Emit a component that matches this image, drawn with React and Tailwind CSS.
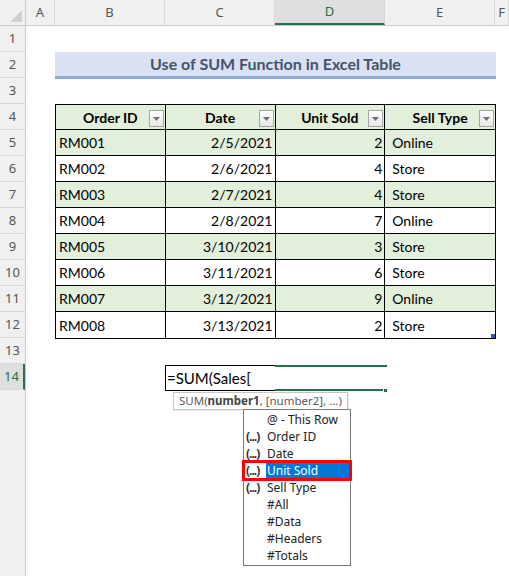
import React from 'react'

const cols = [
    { l: 'A', w: 'w-[29px]' },
    { l: 'B', w: 'w-[110px]' },
    { l: 'C', w: 'w-[110px]' },
    { l: 'D', w: 'w-[110px]', active: true },
    { l: 'E', w: 'w-[110px]' },
    { l: 'F', w: 'flex-1' },
]

const data = [
    ['RM001', '2/5/2021', 2, 'Online'],
    ['RM002', '2/6/2021', 4, 'Store'],
    ['RM003', '2/7/2021', 4, 'Store'],
    ['RM004', '2/8/2021', 7, 'Online'],
    ['RM005', '3/10/2021', 3, 'Store'],
    ['RM006', '3/11/2021', 6, 'Store'],
    ['RM007', '3/12/2021', 9, 'Online'],
    ['RM008', '3/13/2021', 2, 'Store'],
]

const items = [
    { t: '@ - This Row' },
    { t: 'Order ID', col: true },
    { t: 'Date', col: true },
    { t: 'Unit Sold', col: true, sel: true },
    { t: 'Sell Type', col: true },
    { t: '#All' },
    { t: '#Data' },
    { t: '#Headers' },
    { t: '#Totals' },
]

const FilterBtn = () => (
    <span className='absolute right-[1px] bottom-[2px] w-[15px] h-[17px] border border-[#a6a6a6] bg-gradient-to-b from-white to-[#e6e6e6] flex items-center justify-center'>
        <svg width="7" height="4" viewBox="0 0 7 4"><path d="M0 0h7L3.5 4z" fill="#707070" /></svg>
    </span>
)

const HeaderCell = ({ children, last }) => (
    <div className={`relative w-[110px] h-full flex items-center justify-center font-bold ${last ? '' : 'border-r border-black'}`}>
        {children}
        <FilterBtn />
    </div>
)

const App = () => {
    return (
        <div className='w-[509px] h-[576px] overflow-hidden bg-white flex flex-col text-black' style={{ fontFamily: 'Lato, "Liberation Sans", sans-serif' }}>
            {/* column letters */}
            <div className='flex h-[26px] bg-[#f0f0f0] border-b border-[#c9c9c9] shrink-0' style={{ fontFamily: '"Noto Sans", sans-serif' }}>
                <div className='relative w-[26px] h-full border-r border-[#c9c9c9]'>
                    <svg className='absolute right-[3px] bottom-[3px]' width="12" height="12" viewBox="0 0 12 12"><path d="M12 0v12H0z" fill="#d0d0d0" /></svg>
                </div>
                {cols.map(c => (
                    <div key={c.l} className={`${c.w} h-full flex items-center justify-center text-[13px] border-r border-[#d8d8d8] ${c.active ? 'bg-[#dedede] text-[#217346] border-b-2 border-b-[#217346]' : 'text-[#555]'}`}>
                        {c.l}
                    </div>
                ))}
            </div>

            <div className='flex flex-1 min-h-0'>
                {/* row numbers */}
                <div className='w-[26px] bg-[#f0f0f0] border-r border-[#c9c9c9] flex flex-col shrink-0' style={{ fontFamily: '"Noto Sans", sans-serif' }}>
                    {Array.from({ length: 14 }, (_, i) => (
                        <div key={i} className={`h-[26px] shrink-0 flex items-center justify-center text-[13px] border-b border-[#d8d8d8] ${i === 13 ? 'bg-[#dedede] text-[#217346] border-r-2 border-r-[#217346]' : 'text-[#555]'}`}>
                            {i + 1}
                        </div>
                    ))}
                </div>

                {/* sheet */}
                <div className='relative flex-1 flex flex-col text-[14px]'>
                    <div className='h-[26px]' />
                    <div className='h-[26px] pl-[29px]'>
                        <div className='w-[441px] h-[27px] bg-[#d9e1f2] border-b-[3px] border-[#8ea9db] flex items-center justify-center font-bold text-[16px] text-[#44546a]'>
                            Use of SUM Function in Excel Table
                        </div>
                    </div>
                    <div className='h-[26px]' />

                    <div className='pl-[29px]'>
                        <div className='relative w-[441px] border border-black border-t-0'>
                            <div className='flex h-[26px] bg-[#e2efda] border-y border-black'>
                                <HeaderCell>Order ID</HeaderCell>
                                <HeaderCell>Date</HeaderCell>
                                <HeaderCell>Unit Sold</HeaderCell>
                                <HeaderCell last>Sell Type</HeaderCell>
                            </div>
                            {data.map((r, i) => (
                                <div key={r[0]} className={`flex h-[26px] ${i % 2 === 0 ? 'bg-[#e2efda]' : 'bg-white'} ${i < data.length - 1 ? 'border-b border-black' : ''}`}>
                                    <div className='w-[110px] h-full flex items-center pl-[3px] border-r border-black'>{r[0]}</div>
                                    <div className='w-[110px] h-full flex items-center justify-end pr-[2px] border-r border-black'>{r[1]}</div>
                                    <div className='w-[110px] h-full flex items-center justify-end pr-[2px] border-r border-black'>{r[2]}</div>
                                    <div className='w-[110px] h-full flex items-center pl-[7px]'>{r[3]}</div>
                                </div>
                            ))}
                            <span className='absolute right-0 bottom-0 w-[4px] h-[4px] bg-[#3f51b5]' />
                        </div>
                    </div>

                    <div className='h-[26px]' />
                    {/* row 14: editing */}
                    <div className='h-[26px] flex pl-[139px] text-[15px]'>
                        <div className='w-[110px] h-full border border-r-0 border-black flex items-center pl-[1px] whitespace-nowrap overflow-visible'>
                            =SUM(Sales[
                        </div>
                        <div className='relative w-[112px] h-full border-y-2 border-[#217346]'>
                            <span className='absolute -right-[1px] -bottom-[4px] w-[5px] h-[5px] bg-[#217346] border border-white' />
                        </div>
                    </div>

                    {/* function tooltip */}
                    <div className='absolute left-[147px] top-[366px] h-[18px] px-[5px] bg-white border border-[#c6c6c6] flex items-center text-[11.5px] text-[#5a5a5a] whitespace-nowrap shadow-[1px_1px_1px_rgba(0,0,0,0.08)]' style={{ fontFamily: '"Noto Sans", sans-serif' }}>
                        SUM(<b className='text-[#444]'>number1</b>, [number2], ...)
                    </div>

                    {/* autocomplete list */}
                    <div className='absolute left-[217px] top-[383px] w-[108px] bg-white border border-[#7a7a7a] flex flex-col py-[1px] text-[12px] text-[#222]' style={{ fontFamily: '"Noto Sans", sans-serif' }}>
                        {items.map(it => (
                            <div key={it.t} className={`relative h-[17px] flex items-center ${it.sel ? 'outline-[3px] outline-[#ff0000] -outline-offset-1 z-10' : ''}`}>
                                <span className='w-[22px] pl-[2px] text-[12px] font-bold text-[#333] tracking-[-1px] whitespace-nowrap'>{it.col ? '(...)' : ''}</span>
                                <span className={`flex-1 h-full flex items-center pl-[1px] ${it.sel ? 'bg-[#0078d7] text-white' : ''}`}>{it.t}</span>
                            </div>
                        ))}
                    </div>
                </div>
            </div>
        </div>
    )
}

export default App
